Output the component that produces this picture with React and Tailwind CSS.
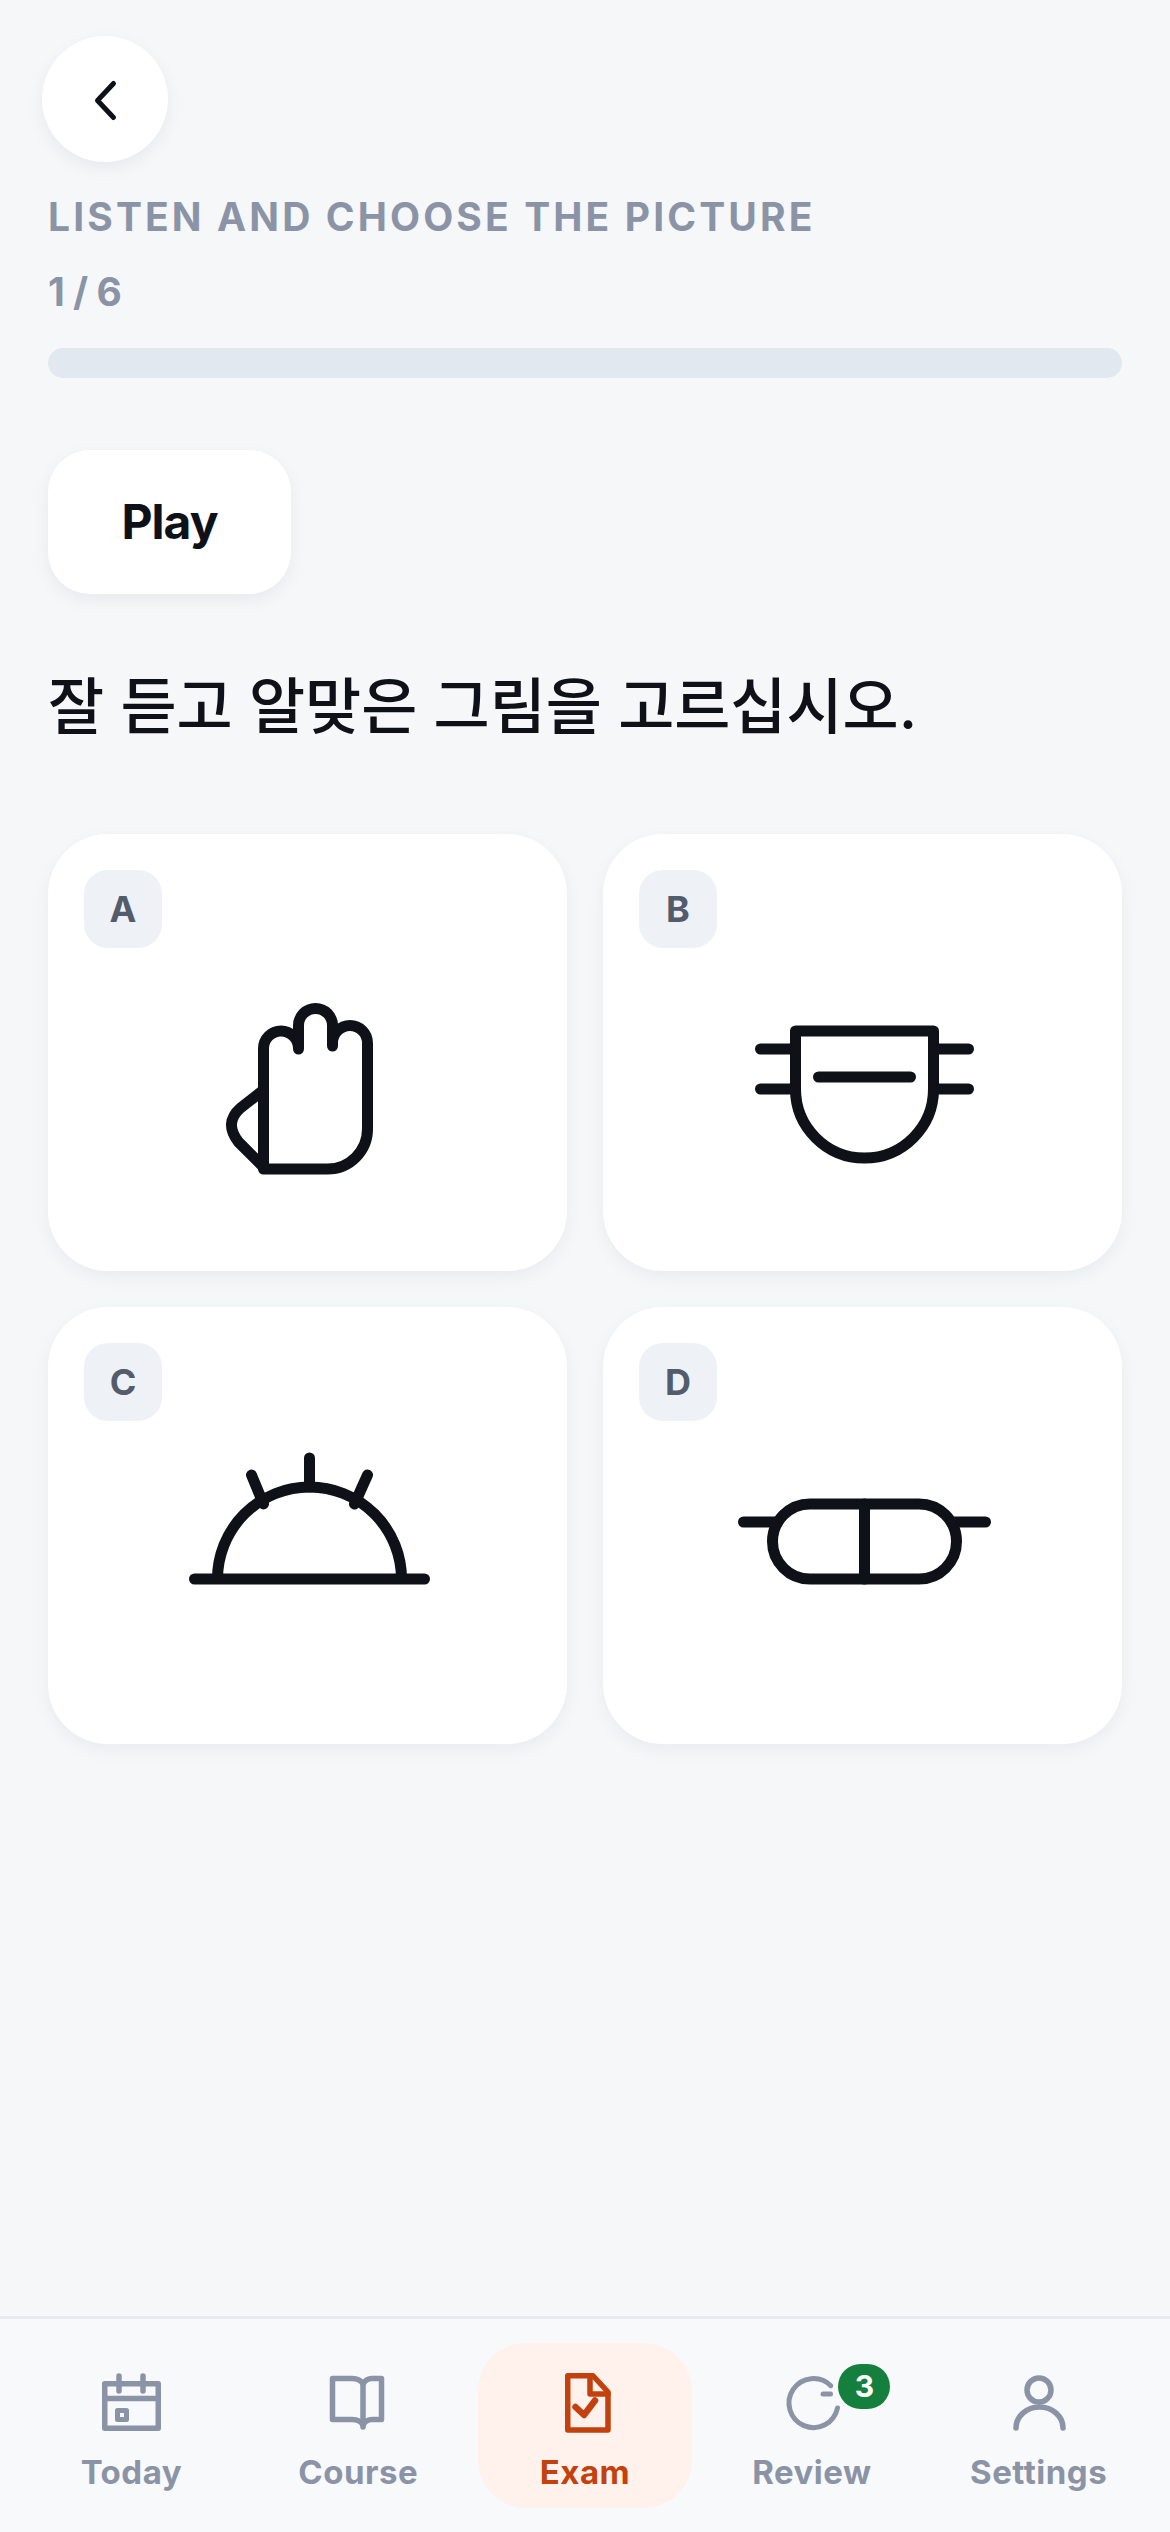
import React from "react";

const INK = "#0e1117";

// Dibujos de las opciones: el viewBox usa las coordenadas de la pantalla
function HandIcon() {
  return (
    <svg viewBox="187.5 960 240 240" className="w-[240px] h-[240px] overflow-visible" fill="none" stroke={INK} strokeWidth="11" strokeLinecap="round" strokeLinejoin="round">
      <path d="M263 1168 V1047.5 A17.5 17.5 0 0 1 298 1047.5 V1048 M298 1048 V1024.5 A17 17 0 0 1 332 1024.5 V1045 M332 1045 V1042 A17.5 17.5 0 0 1 367 1042 V1128 A40 40 0 0 1 327 1168 H263" />
      <path d="M263 1089 L240 1107 Q223 1122 238 1141 L263 1166" />
    </svg>
  );
}

function MaskIcon() {
  return (
    <svg viewBox="742.5 960 240 240" className="w-[240px] h-[240px] overflow-visible" fill="none" stroke={INK} strokeWidth="11" strokeLinecap="round" strokeLinejoin="round">
      <path d="M795 1030 H933 V1088 A69 69 0 0 1 795 1088 Z" />
      <path d="M760 1048 H795 M760 1088 H795 M933 1048 H968 M933 1088 H968 M818 1076 H910" />
    </svg>
  );
}

function DomeIcon() {
  return (
    <svg viewBox="187.5 1434 240 240" className="w-[240px] h-[240px] overflow-visible" fill="none" stroke={INK} strokeWidth="11" strokeLinecap="round" strokeLinejoin="round">
      <path d="M194 1579 H424 M217 1579 A92 92 0 0 1 401 1579" />
      <path d="M309 1458 V1487 M251 1475 L263 1504 M367 1475 L354 1504" />
    </svg>
  );
}

function PillIcon() {
  return (
    <svg viewBox="742.5 1434 240 240" className="w-[240px] h-[240px] overflow-visible" fill="none" stroke={INK} strokeWidth="11" strokeLinecap="round" strokeLinejoin="round">
      <rect x="772" y="1504" width="184" height="75" rx="37.5" />
      <path d="M864 1504 V1579 M743 1522 H777 M951 1522 H985" />
    </svg>
  );
}

function CalendarIcon() {
  return (
    <svg viewBox="0 0 72 72" className="w-[72px] h-[72px]" fill="none" stroke="currentColor" strokeWidth="5.5" strokeLinecap="round" strokeLinejoin="round">
      <rect x="9.75" y="16.75" width="53.5" height="44.5" />
      <path d="M24 9 V24 M48 9 V24 M9.75 31.5 H63.25" />
      <rect x="22.5" y="43.5" width="9" height="9" strokeWidth="5" />
    </svg>
  );
}

function BookIcon() {
  return (
    <svg viewBox="0 0 72 72" className="w-[72px] h-[72px]" fill="none" stroke="currentColor" strokeWidth="5.5" strokeLinecap="round" strokeLinejoin="round">
      <path d="M10.5 11.5 H30 Q38 11.5 41 17 Q44 11.5 50 11.5 H59.5 V52.5 H50 Q44 52.5 41 58 Q38 52.5 30 52.5 H10.5 Z" />
      <path d="M41 17 V60" />
    </svg>
  );
}

function ExamIcon() {
  return (
    <svg viewBox="0 0 72 72" className="w-[72px] h-[72px]" fill="none" stroke="currentColor" strokeWidth="5.5" strokeLinecap="round" strokeLinejoin="round">
      <path d="M18.75 8.75 H44 L59 25 V63 H18.75 Z" />
      <path d="M41 9 V27 H59" />
      <path d="M26.5 40 L35 48 L46 33.5" strokeWidth="6.5" />
    </svg>
  );
}

function ReviewIcon() {
  return (
    <svg viewBox="0 0 72 72" className="w-[72px] h-[72px]" fill="none" stroke="currentColor" strokeWidth="5" strokeLinecap="round" strokeLinejoin="round">
      <path d="M61.5 41 A24.5 24.5 0 1 1 54.8 18.7" />
      <path d="M47 27 H54.5" />
    </svg>
  );
}

function PersonIcon() {
  return (
    <svg viewBox="0 0 72 72" className="w-[72px] h-[72px]" fill="none" stroke="currentColor" strokeWidth="5.5" strokeLinecap="round" strokeLinejoin="round">
      <circle cx="36" cy="23" r="12" />
      <path d="M13 61 A23.5 21 0 0 1 60 61" />
    </svg>
  );
}

function OptionCard({ letter, children }) {
  return (
    <div className="h-[437px] rounded-[60px] bg-white p-[36px] shadow-[0_6px_18px_rgba(15,23,42,0.05)]">
      <div className="flex h-[78px] w-[78px] items-center justify-center rounded-[24px] bg-[#eef1f6] text-[36px] font-bold text-[#525c6b]">
        {letter}
      </div>
      <div className="mt-[13px] flex justify-center">{children}</div>
    </div>
  );
}

function Tab({ label, active, badge, children }) {
  return (
    <div className={`relative flex h-[165px] flex-col items-center rounded-[48px] pt-[24px] ${active ? "bg-[#fff1ec] text-[#c2410c]" : "text-[#8a94a6]"}`}>
      {children}
      <span className="mt-[11px] text-[33px] font-bold leading-[44px] tracking-[0.5px]">{label}</span>
      {badge && (
        <span className="absolute left-[134px] top-[21px] flex h-[45px] w-[52px] items-center justify-center rounded-full bg-[#15803d] text-[30px] font-bold text-white">
          {badge}
        </span>
      )}
    </div>
  );
}

export default function App() {
  return (
    <div className="flex min-h-[2532px] flex-col bg-[#f6f7f9] font-['Inter','Noto_Sans_CJK_KR',sans-serif]">
      <main className="flex-1 px-[48px] pt-[36px]">
        <button className="-ml-[6px] flex h-[126px] w-[126px] items-center justify-center rounded-full bg-white shadow-[0_6px_18px_rgba(15,23,42,0.06)]">
          <svg viewBox="0 0 72 72" className="w-[72px] h-[72px]" fill="none" stroke={INK} strokeWidth="5" strokeLinecap="round" strokeLinejoin="round">
            <path d="M44.5 20.5 L28.5 37.5 L44.5 54.5" />
          </svg>
        </button>

        <p className="mt-[31px] text-[39px] font-bold leading-[48px] tracking-[0.08em] text-[#8a94a6]">
          LISTEN AND CHOOSE THE PICTURE
        </p>
        <p className="mt-[27px] text-[39px] font-bold leading-[48px] text-[#8a94a6] [word-spacing:-1px]">1 / 6</p>

        <div className="mt-[32px] h-[30px] rounded-full bg-[#e2e8f0]" />

        <button className="mt-[72px] block h-[144px] w-[243px] rounded-[42px] bg-white text-[48px] font-bold tracking-[-0.02em] text-[#0e1117] shadow-[0_6px_18px_rgba(15,23,42,0.06)]">
          Play
        </button>

        <h1 className="mt-[77px] text-[61px] font-medium leading-[72px] text-[#0e1117]">잘 듣고 알맞은 그림을 고르십시오.</h1>

        <div className="mt-[91px] grid grid-cols-2 gap-[36px]">
          <OptionCard letter="A"><HandIcon /></OptionCard>
          <OptionCard letter="B"><MaskIcon /></OptionCard>
          <OptionCard letter="C"><DomeIcon /></OptionCard>
          <OptionCard letter="D"><PillIcon /></OptionCard>
        </div>
      </main>

      <nav className="grid grid-cols-5 gap-[12px] border-t-[3px] border-[#e8eaf1] bg-[#f8f9fb] px-[24px] pb-[24px] pt-[24px]">
        <Tab label="Today"><CalendarIcon /></Tab>
        <Tab label="Course"><BookIcon /></Tab>
        <Tab label="Exam" active><ExamIcon /></Tab>
        <Tab label="Review" badge="3"><ReviewIcon /></Tab>
        <Tab label="Settings"><PersonIcon /></Tab>
      </nav>
    </div>
  );
}
